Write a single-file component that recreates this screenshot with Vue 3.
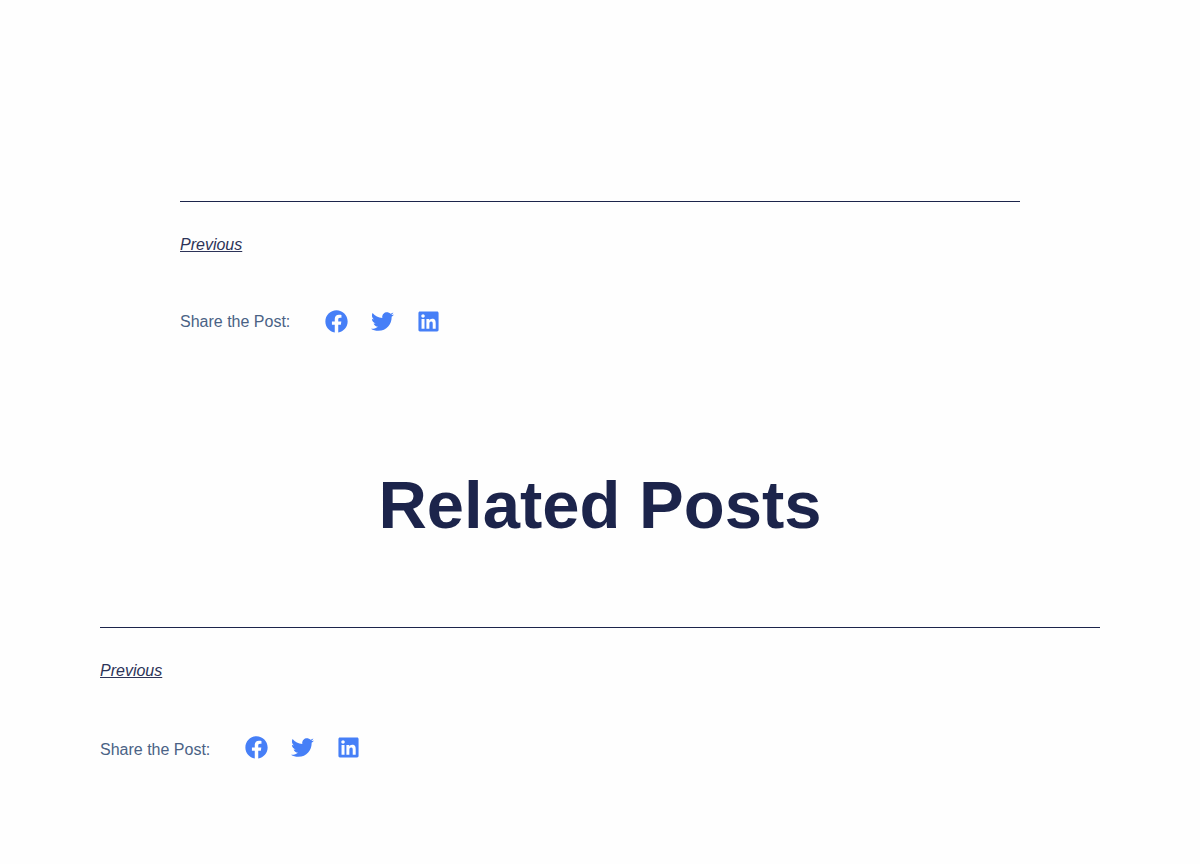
<template>
  <main class="page">
    <section class="post-footer narrow">
      <nav class="post-nav">
        <a href="#" class="prev-link">Previous</a>
      </nav>
      <div class="share">
        <span class="share-label">Share the Post:</span>
        <div class="share-icons">
          <a v-for="icon in icons" :key="icon.name" href="#" class="share-icon" :aria-label="icon.name">
            <svg :viewBox="icon.viewBox"><path :d="icon.path" /></svg>
          </a>
        </div>
      </div>
    </section>

    <h2 class="related-title">Related Posts</h2>

    <section class="post-footer wide">
      <nav class="post-nav">
        <a href="#" class="prev-link">Previous</a>
      </nav>
      <div class="share">
        <span class="share-label">Share the Post:</span>
        <div class="share-icons">
          <a v-for="icon in icons" :key="icon.name" href="#" class="share-icon" :aria-label="icon.name">
            <svg :viewBox="icon.viewBox"><path :d="icon.path" /></svg>
          </a>
        </div>
      </div>
    </section>
  </main>
</template>

<script setup>
const icons = [
  {
    name: 'Facebook',
    viewBox: '0 0 512 512',
    path: 'M504 256C504 119 393 8 256 8S8 119 8 256c0 123.78 90.69 226.38 209.25 245V327.69h-63V256h63v-54.64c0-62.15 37-96.48 93.67-96.48 27.14 0 55.52 4.84 55.52 4.84v61h-31.28c-30.8 0-40.41 19.12-40.41 38.73V256h68.78l-11 71.69h-57.78V501C413.31 482.38 504 379.78 504 256z'
  },
  {
    name: 'Twitter',
    viewBox: '0 0 512 512',
    path: 'M459.37 151.716c.325 4.548.325 9.097.325 13.645 0 138.72-105.583 298.558-298.558 298.558-59.452 0-114.68-17.219-161.137-47.106 8.447.974 16.568 1.299 25.34 1.299 49.055 0 94.213-16.568 130.274-44.832-46.132-.975-84.792-31.188-98.112-72.772 6.498.974 12.995 1.624 19.818 1.624 9.421 0 18.843-1.3 27.614-3.573-48.081-9.747-84.143-51.98-84.143-102.985v-1.299c13.969 7.797 30.214 12.67 47.431 13.319-28.264-18.843-46.781-51.005-46.781-87.391 0-19.492 5.197-37.36 14.294-52.954 51.655 63.675 129.3 105.258 216.365 109.807-1.624-7.797-2.599-15.918-2.599-24.04 0-57.828 46.782-104.934 104.934-104.934 30.213 0 57.502 12.67 76.67 33.137 23.715-4.548 46.456-13.32 66.599-25.34-7.798 24.366-24.366 44.833-46.132 57.827 21.117-2.273 41.584-8.122 60.426-16.243-14.292 20.791-32.161 39.308-52.628 54.253z'
  },
  {
    name: 'LinkedIn',
    viewBox: '-32 0 512 512',
    path: 'M416 32H31.9C14.3 32 0 46.5 0 64.3v383.4C0 465.5 14.3 480 31.9 480H416c17.6 0 32-14.5 32-32.3V64.3c0-17.8-14.4-32.3-32-32.3zM135.4 416H69V202.2h66.5V416zm-33.2-243c-21.3 0-38.5-17.3-38.5-38.5S80.9 96 102.2 96c21.2 0 38.5 17.3 38.5 38.5 0 21.3-17.2 38.5-38.5 38.5zm282.1 243h-66.4V312c0-24.8-.5-56.7-34.5-56.7-34.6 0-39.9 27-39.9 54.9V416h-66.4V202.2h63.7v29.2h.9c8.9-16.8 30.6-34.5 62.9-34.5 67.2 0 79.7 44.3 79.7 101.9V416z'
  }
]
</script>

<style>
body {
  background: #fefefe;
}
</style>

<style scoped>
.page {
  padding: 201px 100px 100px;
  font-family: "Liberation Sans", Arial, sans-serif;
  font-size: 16px;
  line-height: 24px;
}

.post-footer { border-top: 1px solid #1c244b; padding-top: 31px; }
.narrow { margin: 0 80px; }

.post-nav { margin-bottom: 53px; }
.prev-link { color: #2c3358; font-style: italic; text-decoration: underline; }

.share { display: flex; align-items: flex-start; gap: 35px; }
.share-label { color: #4a6285; }
.wide .share-label { padding-top: 2px; }
.share-icons { display: flex; gap: 23px; }
.share-icon { display: flex; }
.share-icon svg { display: block; width: 23px; height: 23px; fill: #467ff7; }

.related-title {
  margin: 131px 0 82px;
  color: #1c244b;
  font-size: 67px;
  font-weight: bold;
  line-height: 80px;
  text-align: center;
}
</style>
